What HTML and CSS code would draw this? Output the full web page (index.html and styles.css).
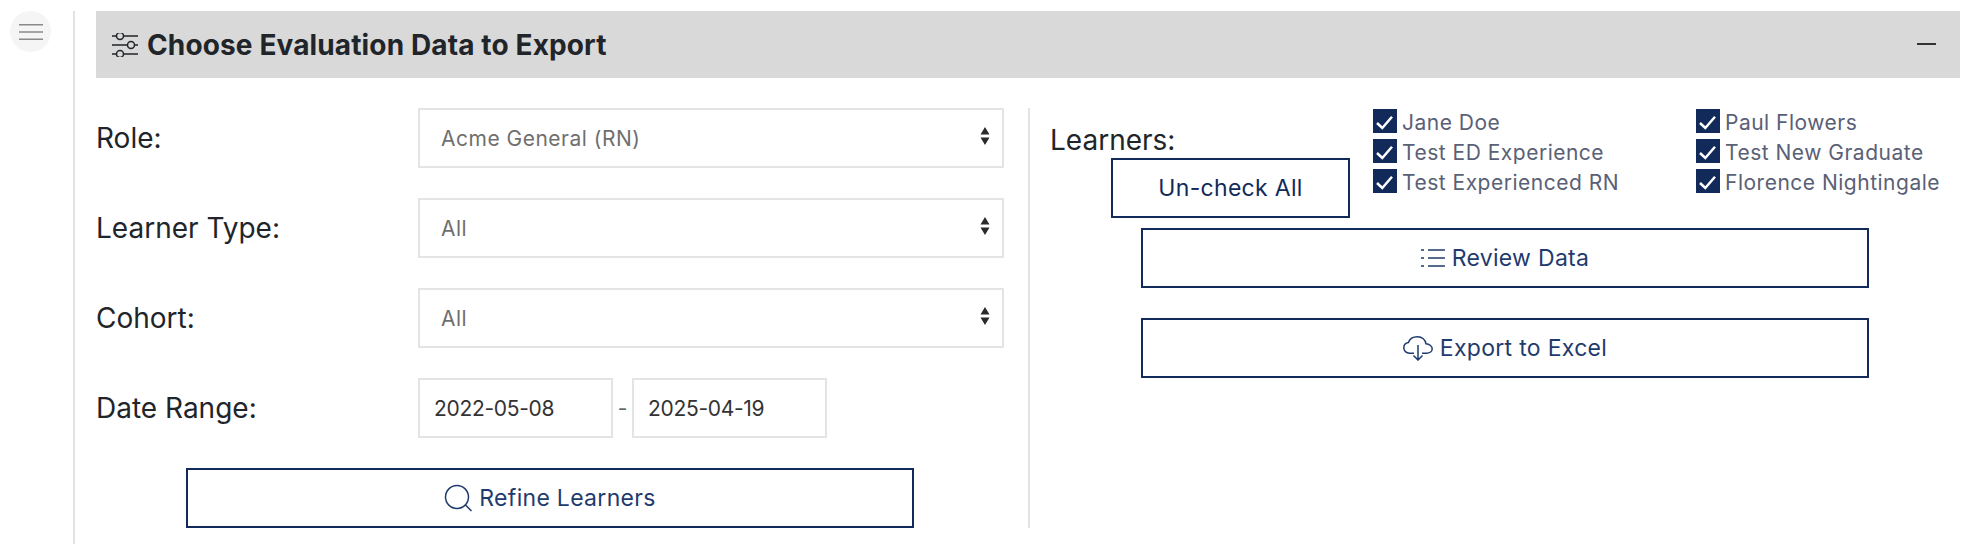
FILE: index.html
```html
<!DOCTYPE html>
<html lang="en">
<head>
  <meta charset="UTF-8" />
  <title>Export Evaluation Data</title>
  <link rel="stylesheet" href="styles.css">
</head>
<body>
  <div class="app">
    <aside class="sidebar">
      <button class="menu-btn" aria-label="Menu">
        <svg width="24" height="18" viewBox="0 0 24 18"><path d="M0 1.700h24M0 9h24M0 16.300h24" /></svg>
      </button>
    </aside>

    <main class="main">
      <header class="panel-head">
        <svg class="head-icon" width="26" height="24" viewBox="0 0 26 24">
          <path d="M0 3h4M12 3h14M0 12h15M23 12h3M0 21h4M12 21h14" />
          <circle cx="8" cy="3" r="3.500" />
          <circle cx="19" cy="12" r="3.500" />
          <circle cx="8" cy="21" r="3.500" />
        </svg>
        <h1>Choose Evaluation Data to Export</h1>
        <span class="collapse"></span>
      </header>

      <div class="panel-body">
        <form class="filters">
          <div class="field">
            <label for="role">Role:</label>
            <div class="select-wrap">
              <select id="role"><option>Acme General (RN)</option></select>
              <svg class="arrows" width="10" height="18" viewBox="0 0 10 18"><path d="M5 0l4.500 7.500h-9zM5 18L.5 10.500h9z" /></svg>
            </div>
          </div>
          <div class="field">
            <label for="type">Learner Type:</label>
            <div class="select-wrap">
              <select id="type"><option>All</option></select>
              <svg class="arrows" width="10" height="18" viewBox="0 0 10 18"><path d="M5 0l4.500 7.500h-9zM5 18L.5 10.500h9z" /></svg>
            </div>
          </div>
          <div class="field">
            <label for="cohort">Cohort:</label>
            <div class="select-wrap">
              <select id="cohort"><option>All</option></select>
              <svg class="arrows" width="10" height="18" viewBox="0 0 10 18"><path d="M5 0l4.500 7.500h-9zM5 18L.5 10.500h9z" /></svg>
            </div>
          </div>
          <div class="field">
            <label for="from">Date Range:</label>
            <div class="dates">
              <input id="from" type="text" value="2022-05-08" />
              <span class="dash">-</span>
              <input id="to" type="text" value="2025-04-19" />
            </div>
          </div>
          <button type="button" class="btn btn-wide">
            <svg width="28" height="28" viewBox="0 0 28 28"><circle cx="13" cy="13" r="11.500" /><path d="M21.500 21l6 6" /></svg>
            Refine Learners
          </button>
        </form>

        <section class="learners">
          <div class="learners-top">
            <div class="learners-side">
              <span class="learners-label">Learners:</span>
              <button type="button" class="btn btn-small">Un-check All</button>
            </div>
            <ul class="learner-list">
              <li><span class="check"><svg width="24" height="24" viewBox="0 0 24 24"><path d="M4 14l5.300 5L19 7.700" /></svg></span>Jane Doe</li>
              <li><span class="check"><svg width="24" height="24" viewBox="0 0 24 24"><path d="M4 14l5.300 5L19 7.700" /></svg></span>Paul Flowers</li>
              <li><span class="check"><svg width="24" height="24" viewBox="0 0 24 24"><path d="M4 14l5.300 5L19 7.700" /></svg></span>Test ED Experience</li>
              <li><span class="check"><svg width="24" height="24" viewBox="0 0 24 24"><path d="M4 14l5.300 5L19 7.700" /></svg></span>Test New Graduate</li>
              <li><span class="check"><svg width="24" height="24" viewBox="0 0 24 24"><path d="M4 14l5.300 5L19 7.700" /></svg></span>Test Experienced RN</li>
              <li><span class="check"><svg width="24" height="24" viewBox="0 0 24 24"><path d="M4 14l5.300 5L19 7.700" /></svg></span>Florence Nightingale</li>
            </ul>
          </div>
          <button type="button" class="btn btn-wide">
            <svg width="24" height="18" viewBox="0 0 24 18"><path d="M0 1h3M7 1h17M0 9h3M7 9h17M0 17h3M7 17h17" /></svg>
            Review Data
          </button>
          <button type="button" class="btn btn-wide">
            <svg width="30" height="25" viewBox="0 0 30 25">
              <path d="M11 17.200H6.500C3.200 17.200.8 14.800.8 11.900c0-2.800 2-5 4.600-5.400C6.500 3.200 10 .8 14.500.8c4.600 0 8 3 8.500 7 3.500.3 6.200 2.500 6.200 4.900 0 2.500-2.500 4.500-5.700 4.500H19" />
              <path d="M15 9v15M10.500 19.500l4.500 4.500 4.500-4.500" />
            </svg>
            Export to Excel
          </button>
        </section>
      </div>
    </main>
  </div>
</body>
</html>
```

FILE: styles.css
```css
* {
  box-sizing: border-box;
}

html, body {
  height: 100%;
  margin: 0;
  font-family: Inter, "Liberation Sans", sans-serif;
  background: #fff;
  color: #212529;
  overflow: hidden;
}

.app {
  display: flex;
  height: 100%;
  padding-top: 11px;
}

.sidebar {
  width: 73px;
  padding-left: 10px;
  flex-shrink: 0;
}

.menu-btn {
  width: 41px;
  height: 41px;
  border: none;
  border-radius: 50%;
  background: #f5f5f5;
  padding: 0;
  display: flex;
  align-items: center;
  justify-content: center;
}

.menu-btn svg {
  fill: none;
  stroke: #8a8a8a;
  stroke-width: 1.5;
}

.main {
  flex: 1;
  border-left: 2px solid #e3e3e3;
  padding: 0 8px 0 21px;
}

.panel-head {
  height: 67px;
  background: #d9d9d9;
  display: flex;
  align-items: center;
  padding: 0 24px 0 16px;
}

.head-icon {
  fill: none;
  stroke: #212529;
  stroke-width: 1.5;
  margin-right: 9px;
}

.panel-head h1 {
  margin: 0;
  font-size: 28px;
  font-weight: 700;
  letter-spacing: 0.13px;
}

.collapse {
  margin-left: auto;
  margin-bottom: 1px;
  width: 19px;
  height: 2px;
  background: #333;
}

.panel-body {
  display: grid;
  grid-template-columns: 934px 1fr;
  margin-top: 30px;
}

.filters {
  display: flex;
  flex-direction: column;
  gap: 30px;
  padding-right: 24px;
  border-right: 2px solid #e3e3e3;
}

.field {
  display: flex;
  align-items: center;
  height: 60px;
}

.field label {
  width: 322px;
  flex-shrink: 0;
  font-size: 28px;
}

.select-wrap {
  position: relative;
  flex: 1;
  height: 60px;
}

.select-wrap select {
  appearance: none;
  width: 100%;
  height: 100%;
  border: 2px solid #e4e4e4;
  border-radius: 0;
  background: #fff;
  padding: 0 21px;
  font: inherit;
  font-size: 21px;
  letter-spacing: 0.5px;
  color: #6f6f6f;
}

.arrows {
  position: absolute;
  right: 14px;
  top: 19px;
  fill: #2a2a2a;
}

.dates {
  display: flex;
  align-items: center;
}

.dates input {
  width: 195px;
  height: 60px;
  border: 2px solid #e4e4e4;
  padding: 0 14px;
  font: inherit;
  font-size: 21px;
  letter-spacing: -0.3px;
  color: #333;
}

.dash {
  width: 19px;
  text-align: center;
  font-size: 21px;
  color: #666;
}

.btn {
  display: flex;
  align-items: center;
  justify-content: center;
  gap: 7px;
  height: 60px;
  border: 2px solid #122a5a;
  border-radius: 0;
  background: #fff;
  color: #1f3b6d;
  font: inherit;
  font-size: 23px;
  letter-spacing: 0.3px;
  padding: 0;
}

.btn svg {
  fill: none;
  stroke: #1f3b6d;
  stroke-width: 1.5;
}

.btn-wide {
  width: 728px;
  align-self: center;
}

.btn-small {
  width: 239px;
  margin-left: 61px;
  color: #122a5a;
}

.learners {
  display: flex;
  flex-direction: column;
  padding-left: 20px;
}

.learners-top {
  display: flex;
  height: 110px;
  margin-bottom: 10px;
}

.learners-side {
  width: 323px;
  flex-shrink: 0;
}

.learners-label {
  display: block;
  margin-top: 14px;
  height: 36px;
  line-height: 36px;
  font-size: 28px;
}

.learner-list {
  list-style: none;
  margin: 1px 0 0;
  padding: 0;
  display: grid;
  grid-template-columns: 323px 1fr;
  grid-auto-rows: 30px;
  font-size: 21px;
  letter-spacing: 0.5px;
  color: #5a6075;
  white-space: nowrap;
}

.learner-list li {
  display: flex;
  align-items: flex-start;
  line-height: 28px;
}

.check {
  width: 24px;
  height: 24px;
  background: #122a5a;
  margin-right: 5px;
  flex-shrink: 0;
}

.check svg {
  display: block;
  fill: none;
  stroke: #fff;
  stroke-width: 2.5;
}

.learners .btn-wide + .btn-wide {
  margin-top: 30px;
}
```
